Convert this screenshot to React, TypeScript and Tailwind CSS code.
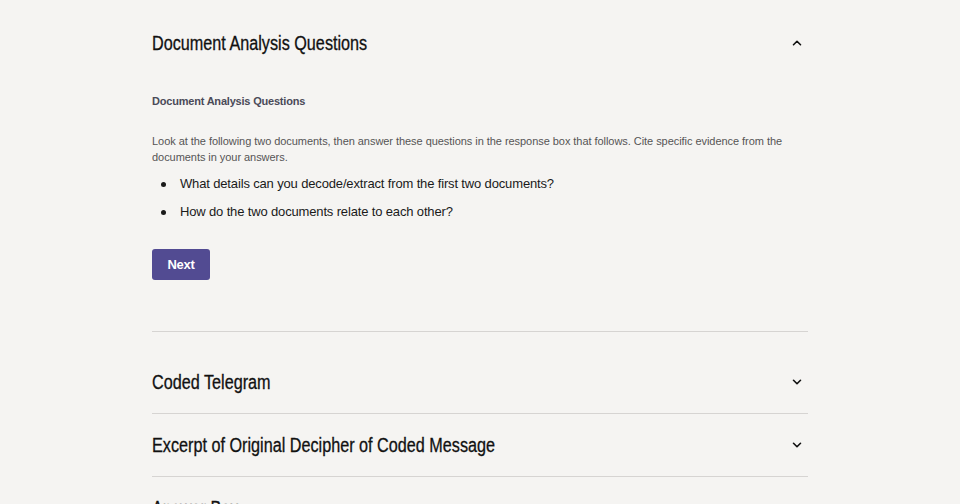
import { ChevronDown, ChevronUp } from "lucide-react";

const others = [
  "Coded Telegram",
  "Excerpt of Original Decipher of Coded Message",
  "Answer Box",
];

function Heading({ children }: { children: React.ReactNode }) {
  // condensed look: no narrow face installed, so squeeze Liberation Sans
  return (
    <h2 className="inline-block origin-left scale-x-[0.81] whitespace-nowrap text-[20px] leading-[28px] text-[#111] [-webkit-text-stroke:0.3px_#111]">
      {children}
    </h2>
  );
}

export default function App() {
  return (
    <div className="min-h-screen bg-[#f5f4f2] pt-[12px] font-['Liberation_Sans',sans-serif]">
      <div className="mx-auto w-[656px]">
        {/* Open section */}
        <section className="border-b border-[#d6d4d2] pb-[51px]">
          <div className="flex h-[62px] items-center justify-between">
            <Heading>Document Analysis Questions</Heading>
            <ChevronUp className="mr-[4px] h-[14px] w-[14px] text-[#111]" strokeWidth={2.75} />
          </div>

          <div className="pt-[19px]">
            <h3 className="text-[11px] leading-[16px] font-bold tracking-[-0.2px] text-[#4a4a58]">
              Document Analysis Questions
            </h3>
            <p className="mt-[24px] text-[11px] leading-[16px] tracking-[-0.05px] text-[#555]">
              Look at the following two documents, then answer these questions in the response box
              that follows. Cite specific evidence from the documents in your answers.
            </p>
            <ul className="mt-[9px] flex flex-col gap-[8px]">
              <li className="flex items-center text-[13px] leading-[20px] tracking-[-0.15px] text-[#1a1a1a]">
                <span className="ml-[9px] mr-[14px] h-[5px] w-[5px] rounded-full bg-[#1a1a1a]" />
                What details can you decode/extract from the first two documents?
              </li>
              <li className="flex items-center text-[13px] leading-[20px] tracking-[-0.15px] text-[#1a1a1a]">
                <span className="ml-[9px] mr-[14px] h-[5px] w-[5px] rounded-full bg-[#1a1a1a]" />
                How do the two documents relate to each other?
              </li>
            </ul>
            <button className="mt-[27px] h-[31px] w-[58px] rounded-[3px] bg-[#524b92] text-[13px] font-bold tracking-[-0.3px] text-white">
              Next
            </button>
          </div>
        </section>

        {/* Collapsed sections */}
        <div className="mt-[19px]">
          {others.map((title) => (
            <div
              key={title}
              className="flex h-[63px] items-center justify-between border-b border-[#d6d4d2]"
            >
              <Heading>{title}</Heading>
              <ChevronDown className="mr-[4px] h-[14px] w-[14px] text-[#111]" strokeWidth={2.75} />
            </div>
          ))}
        </div>
      </div>
    </div>
  );
}
